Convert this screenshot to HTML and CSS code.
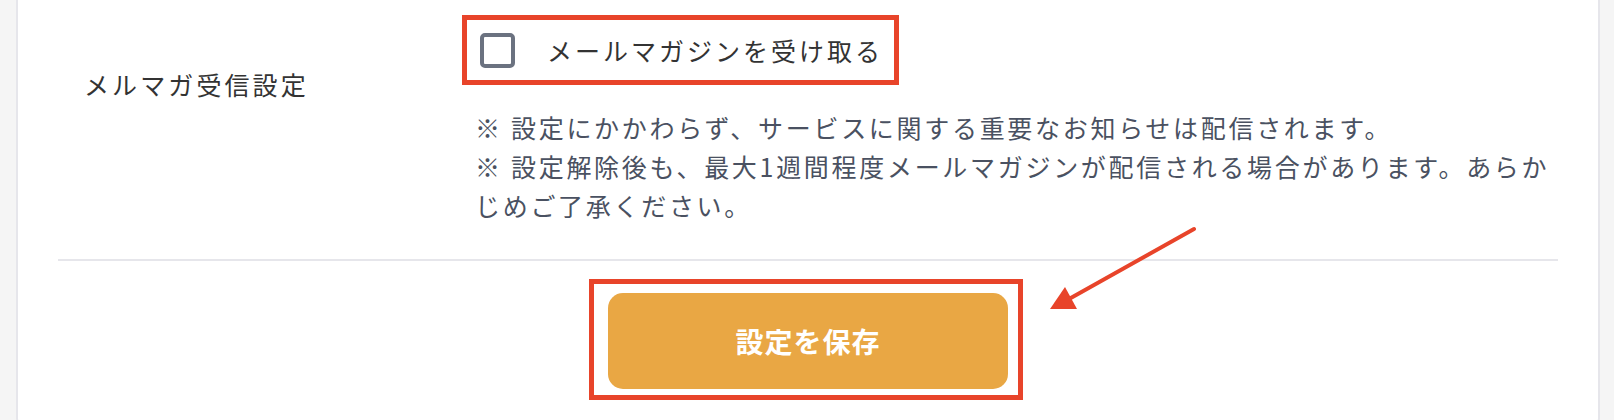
FILE: index.html
```html
<!DOCTYPE html>
<html lang="ja">
<head>
  <meta charset="UTF-8" />
  <meta name="viewport" content="width=device-width, initial-scale=1.0"/>
  <title>メルマガ受信設定</title>
  <link rel="stylesheet" href="styles.css">
</head>
<body>
  <div class="card">
    <form id="settingsForm">
      <div class="row">
        <div class="row-label">メルマガ受信設定</div>
        <div class="row-body">
          <div class="mark mark-check">
            <label class="check">
              <input type="checkbox" id="mailmag" name="mailmag">
              <span class="check-box"></span>
              <span class="check-text">メールマガジンを受け取る</span>
            </label>
          </div>
          <p class="note">
            ※ 設定にかかわらず、サービスに関する重要なお知らせは配信されます。<br>
            ※ 設定解除後も、最大1週間程度メールマガジンが配信される場合があります。あらかじめご了承ください。
          </p>
        </div>
      </div>

      <div class="actions">
        <div class="mark mark-save">
          <button type="submit" class="save">設定を保存</button>
        </div>
      </div>
    </form>

    <svg class="arrow" width="170" height="100" viewBox="0 0 170 100">
      <line x1="154" y1="7" x2="29" y2="77" stroke="#e8442a" stroke-width="4" stroke-linecap="round"/>
      <polygon points="10,87 25,65 37,87" fill="#e8442a"/>
    </svg>
  </div>

  <script>
    document.getElementById("settingsForm").addEventListener("submit", function(e) {
      e.preventDefault();
    });
  </script>
</body>
</html>
```

FILE: styles.css
```css
html, body {
  margin: 0;
  height: 420px;
  overflow: hidden;
}
body {
  background: #f5f5f5;
  padding: 0 14px 0 16px;
  font-family: "Noto Sans CJK JP", "Noto Sans", sans-serif;
  color: #333;
}
.card {
  position: relative;
  background: white;
  border: 2px solid #e6e6eb;
  border-top: none;
  border-radius: 0 0 10px 10px;
  padding: 0 40px;
}
.row {
  display: grid;
  grid-template-columns: 417px 1fr;
  padding: 15px 0 34px;
  border-bottom: 2px solid #e6e6eb;
}
.row-label {
  padding: 50px 0 0 26px;
  font-size: 25px;
  line-height: 39px;
  letter-spacing: 3.1px;
  color: #333;
}
.mark {
  border: 5px solid #e8442a;
}
.mark-check {
  display: inline-block;
  margin-left: -13px;
}
.check {
  display: flex;
  align-items: center;
  height: 60px;
  padding: 0 11px 0 13px;
  cursor: pointer;
}
.check input {
  display: none;
}
.check-box {
  width: 35px;
  height: 35px;
  box-sizing: border-box;
  border: 4px solid #6b7280;
  border-radius: 5px;
  margin-right: 32px;
}
.check-text {
  font-size: 25px;
  letter-spacing: 3px;
  color: #333;
}
.note {
  margin: 23px 0 0;
  font-size: 25px;
  line-height: 39px;
  letter-spacing: 2.7px;
  color: #4a5161;
}
.actions {
  display: flex;
  justify-content: center;
  padding: 18px 0 26px;
}
.mark-save {
  padding: 9px 10px 6px 14px;
  margin-right: 4px;
}
.save {
  display: block;
  width: 400px;
  height: 96px;
  border: none;
  border-radius: 15px;
  background-color: #e9a744;
  color: white;
  font-family: "Noto Sans CJK JP", sans-serif;
  font-size: 28px;
  font-weight: bold;
  letter-spacing: 1px;
  cursor: pointer;
}
.arrow {
  position: absolute;
  left: 1022px;
  top: 222px;
}
```
